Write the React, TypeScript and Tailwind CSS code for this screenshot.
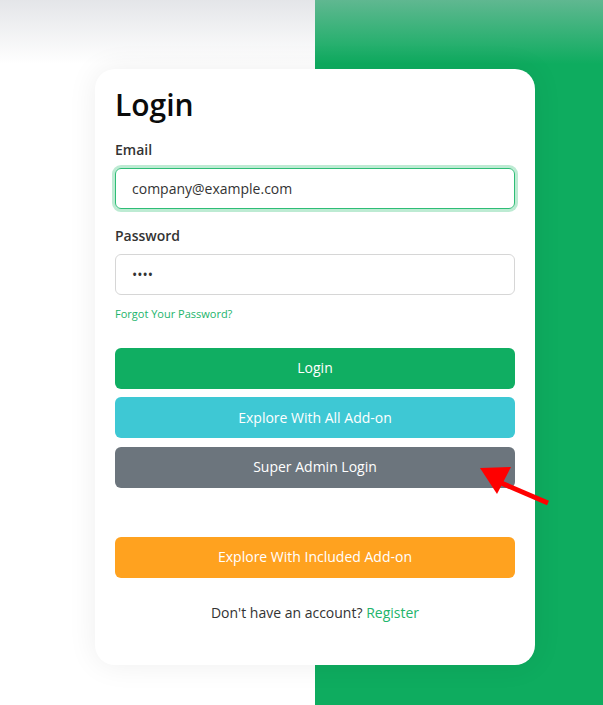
import React from 'react'

export default function App() {
  return (
    <div className="relative min-h-[705px] overflow-hidden bg-[linear-gradient(to_right,#ffffff_315px,#0eac5f_315px)] font-['Open_Sans',sans-serif]">
      {/* soft shade at the top of the page */}
      <div className="pointer-events-none absolute inset-x-0 top-0 h-[64px] bg-[linear-gradient(to_bottom,rgba(195,198,205,0.45),rgba(195,198,205,0))]" />

      <div className="relative pl-[95px] pt-[69px]">
        <div className="w-[440px] rounded-[20px] bg-white px-5 pb-[42px] pt-[18px] shadow-[0_0_30px_rgba(0,0,0,0.07)]">
          <h1 className="text-[30px] font-semibold leading-[36px] text-[#0b0b0b]">Login</h1>

          <form className="mt-[16px]" onSubmit={(e) => e.preventDefault()}>
            <label className="mb-2 block text-sm font-semibold leading-[21px] text-[#333]">Email</label>
            <input
              type="email"
              defaultValue="company@example.com"
              className="block h-[41px] w-full rounded-md border border-[#2ebd76] px-4 text-sm text-[#333] shadow-[0_0_0_3px_#bdebd3] outline-none"
            />

            <label className="mb-2 mt-4 block text-sm font-semibold leading-[21px] text-[#333]">Password</label>
            <input
              type="password"
              defaultValue="1234"
              className="block h-[41px] w-full rounded-md border border-[#d6d6d6] px-4 text-sm text-[#333] outline-none"
            />

            <a href="#" className="mt-[11px] block text-[11px] leading-[16.5px] text-[#22b46b]">
              Forgot Your Password?
            </a>

            <div className="mt-[25px] flex flex-col gap-[8.5px]">
              <button className="h-[41px] w-full rounded-md bg-[#10ae62] text-sm text-white">Login</button>
              <button className="h-[41px] w-full rounded-md bg-[#3ec8d4] text-sm text-white">Explore With All Add-on</button>
              <button className="h-[41px] w-full rounded-md bg-[#6c757d] text-sm text-white">Super Admin Login</button>
            </div>

            <button className="mt-[49px] h-[41px] w-full rounded-md bg-[#ffa21f] text-sm text-white">
              Explore With Included Add-on
            </button>
          </form>

          <p className="mt-[24px] text-center text-sm leading-[21px] text-[#333]">
            Don't have an account? <a href="#" className="text-[#22b46b]">Register</a>
          </p>
        </div>
      </div>

      {/* annotation arrow */}
      <svg className="pointer-events-none absolute left-[470px] top-[455px]" width="90" height="60" viewBox="470 455 90 60">
        <line x1="492" y1="479" x2="548" y2="503" stroke="#ff0000" strokeWidth="5" />
        <polygon points="480,468 511,467 497,494" fill="#ff0000" />
      </svg>
    </div>
  )
}
